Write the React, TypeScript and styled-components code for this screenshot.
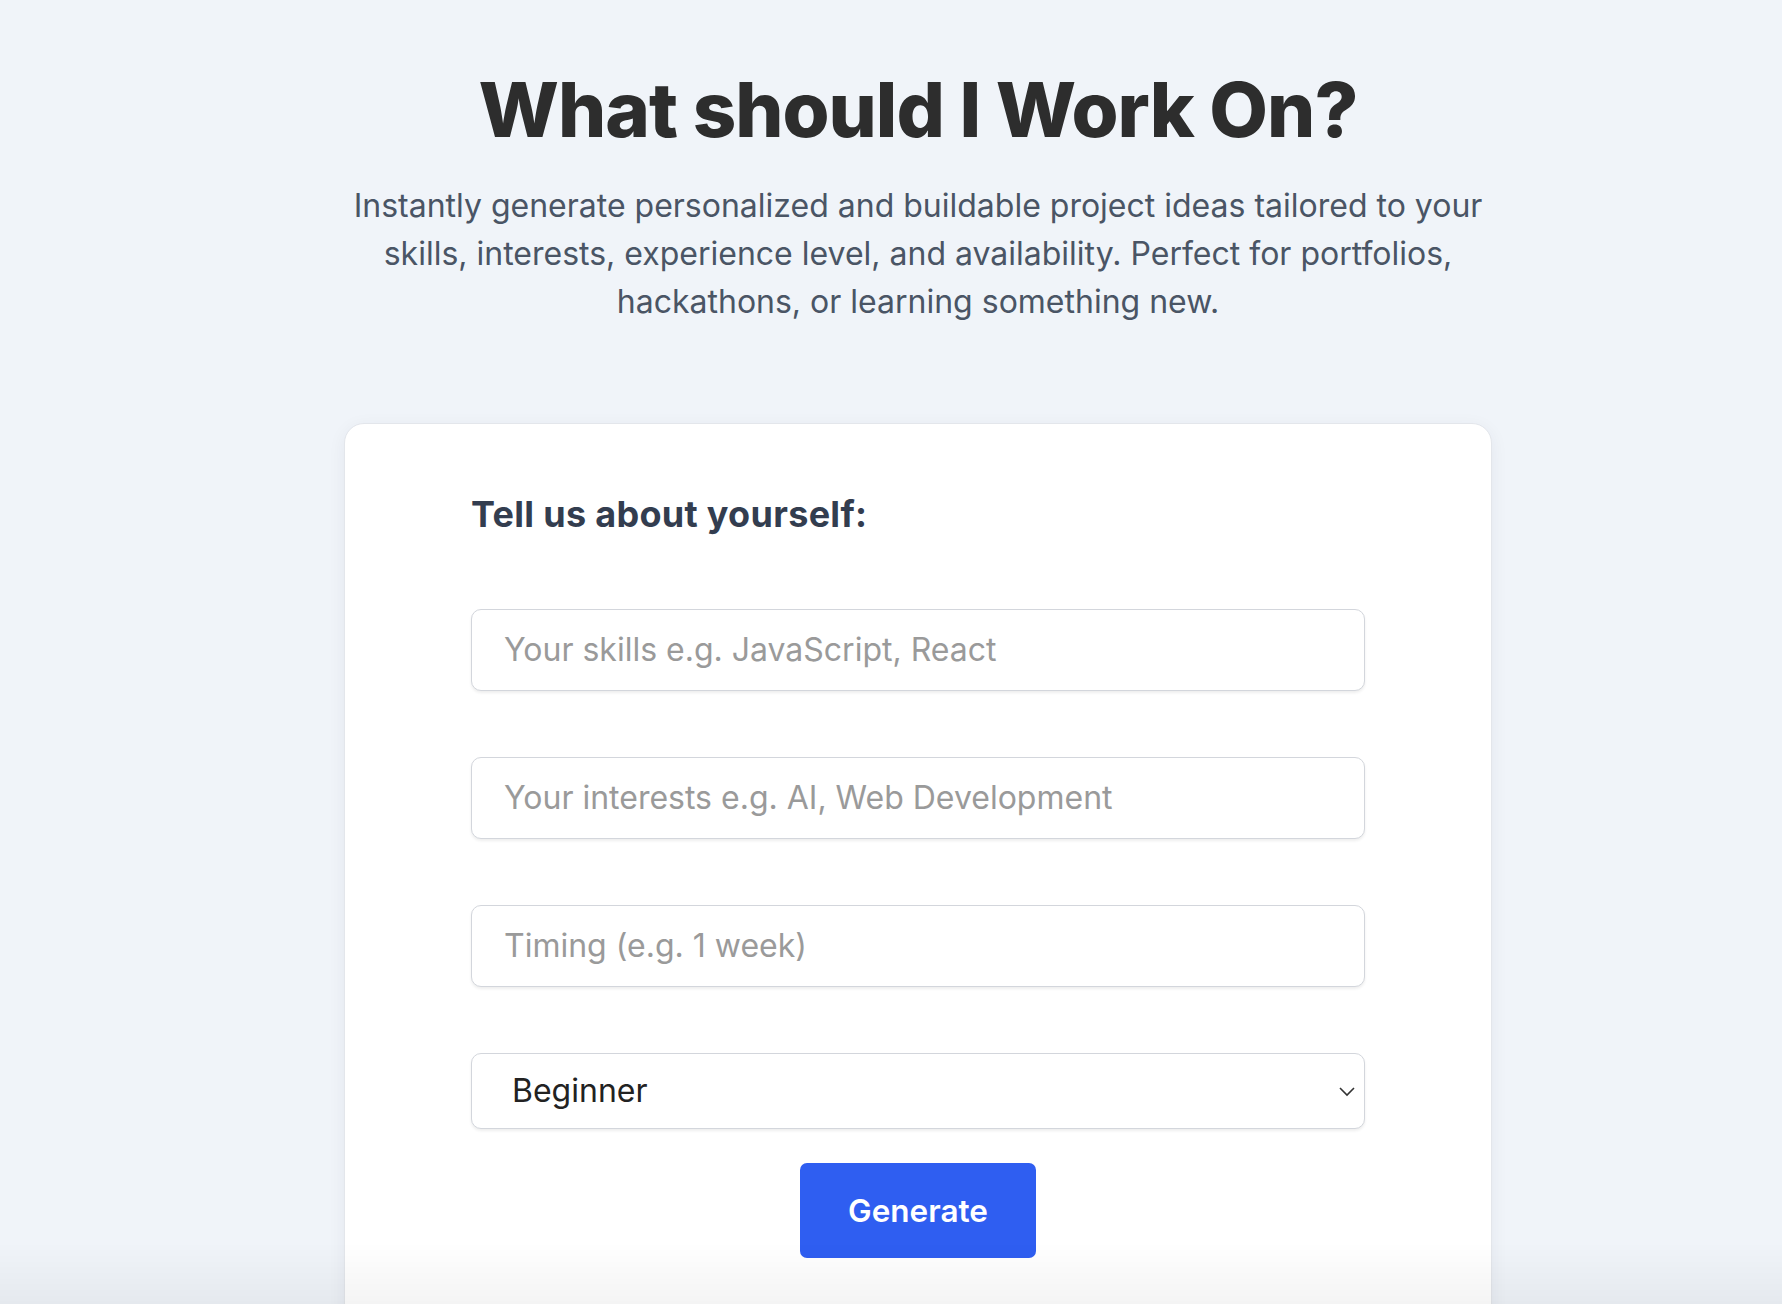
import React from "react";
import styled, { createGlobalStyle } from "styled-components";

const GlobalStyle = createGlobalStyle`
  * { box-sizing: border-box; }
  html, body { margin: 0; padding: 0; background: #f0f4f9; }
  body { font-family: Inter, "Noto Sans", sans-serif; overflow: hidden; }
`;

const Page = styled.main`
  display: flex;
  flex-direction: column;
  align-items: center;
  padding: 64px 0 0 54px;
  min-height: 1304px;
`;

const Title = styled.h1`
  margin: 0;
  font-family: Inter, sans-serif;
  font-weight: 800;
  font-size: 76px;
  line-height: 1.2;
  letter-spacing: -1px;
  color: #2d2d2d;
  text-align: center;
`;

const Subtitle = styled.p`
  margin: 27px 0 0;
  max-width: 1150px;
  font-size: 32px;
  line-height: 47.7px;
  color: #4a5565;
  text-align: center;
`;

const Card = styled.section`
  margin-top: 98px;
  width: 1148px;
  background: #ffffff;
  border: 1px solid #e3e6eb;
  border-radius: 20px;
  box-shadow: 0 4px 18px rgba(30, 40, 60, 0.06);
  padding: 69px 126px 120px;
  display: flex;
  flex-direction: column;
`;

const FormTitle = styled.h2`
  margin: 0 0 72px;
  font-family: Inter, sans-serif;
  font-weight: 700;
  font-size: 36px;
  line-height: 1.21;
  letter-spacing: 0.3px;
  color: #333d4f;
`;

const Fields = styled.div`
  display: flex;
  flex-direction: column;
  gap: 66px;
`;

const TextInput = styled.input`
  height: 82px;
  width: 100%;
  padding: 0 32px;
  border: 1.5px solid #d3d6dc;
  border-radius: 10px;
  box-shadow: 0 2px 3px rgba(0, 0, 0, 0.07);
  background: #fff;
  font-family: Inter, sans-serif;
  font-size: 32px;
  color: #222;
  outline: none;
  &::placeholder { color: #9a9a9a; }
`;

const SelectWrap = styled.div`
  position: relative;
`;

const Select = styled.select`
  appearance: none;
  -webkit-appearance: none;
  height: 76px;
  width: 100%;
  padding: 0 40px;
  border: 1.5px solid #d3d6dc;
  border-radius: 10px;
  box-shadow: 0 2px 3px rgba(0, 0, 0, 0.07);
  background: #fff;
  font-family: Inter, sans-serif;
  font-size: 32px;
  color: #222;
  outline: none;
`;

const Chevron = styled.svg`
  position: absolute;
  right: 9px;
  top: 50%;
  transform: translateY(-50%);
  pointer-events: none;
`;

const ButtonRow = styled.div`
  display: flex;
  justify-content: center;
  margin-top: 34px;
`;

const GenerateButton = styled.button`
  height: 95px;
  padding: 0 48px;
  min-width: 236px;
  border: none;
  border-radius: 7px;
  background: #2f5ef1;
  color: #fff;
  font-family: Inter, sans-serif;
  font-weight: 600;
  font-size: 31.5px;
  cursor: pointer;
`;

const BottomFade = styled.div`
  position: fixed;
  left: 0;
  right: 0;
  bottom: 0;
  height: 62px;
  background: linear-gradient(to bottom, rgba(0, 0, 0, 0), rgba(0, 0, 0, 0.045));
  pointer-events: none;
`;

export default function App() {
  return (
    <>
      <GlobalStyle />
      <Page>
        <Title>What should I Work On?</Title>
        <Subtitle>
          Instantly generate personalized and buildable project ideas tailored to your skills,
          interests, experience level, and availability. Perfect for portfolios, hackathons, or
          learning something new.
        </Subtitle>
        <Card>
          <FormTitle>Tell us about yourself:</FormTitle>
          <Fields>
            <TextInput placeholder="Your skills e.g. JavaScript, React" />
            <TextInput placeholder="Your interests e.g. AI, Web Development" />
            <TextInput placeholder="Timing (e.g. 1 week)" />
            <SelectWrap>
              <Select defaultValue="Beginner">
                <option>Beginner</option>
                <option>Intermediate</option>
                <option>Advanced</option>
              </Select>
              <Chevron width="18" height="12" viewBox="0 0 18 12">
                <path d="M2 3 L9 10 L16 3" fill="none" stroke="#333" strokeWidth="1.6" />
              </Chevron>
            </SelectWrap>
          </Fields>
          <ButtonRow>
            <GenerateButton>Generate</GenerateButton>
          </ButtonRow>
        </Card>
      </Page>
      <BottomFade />
    </>
  );
}
